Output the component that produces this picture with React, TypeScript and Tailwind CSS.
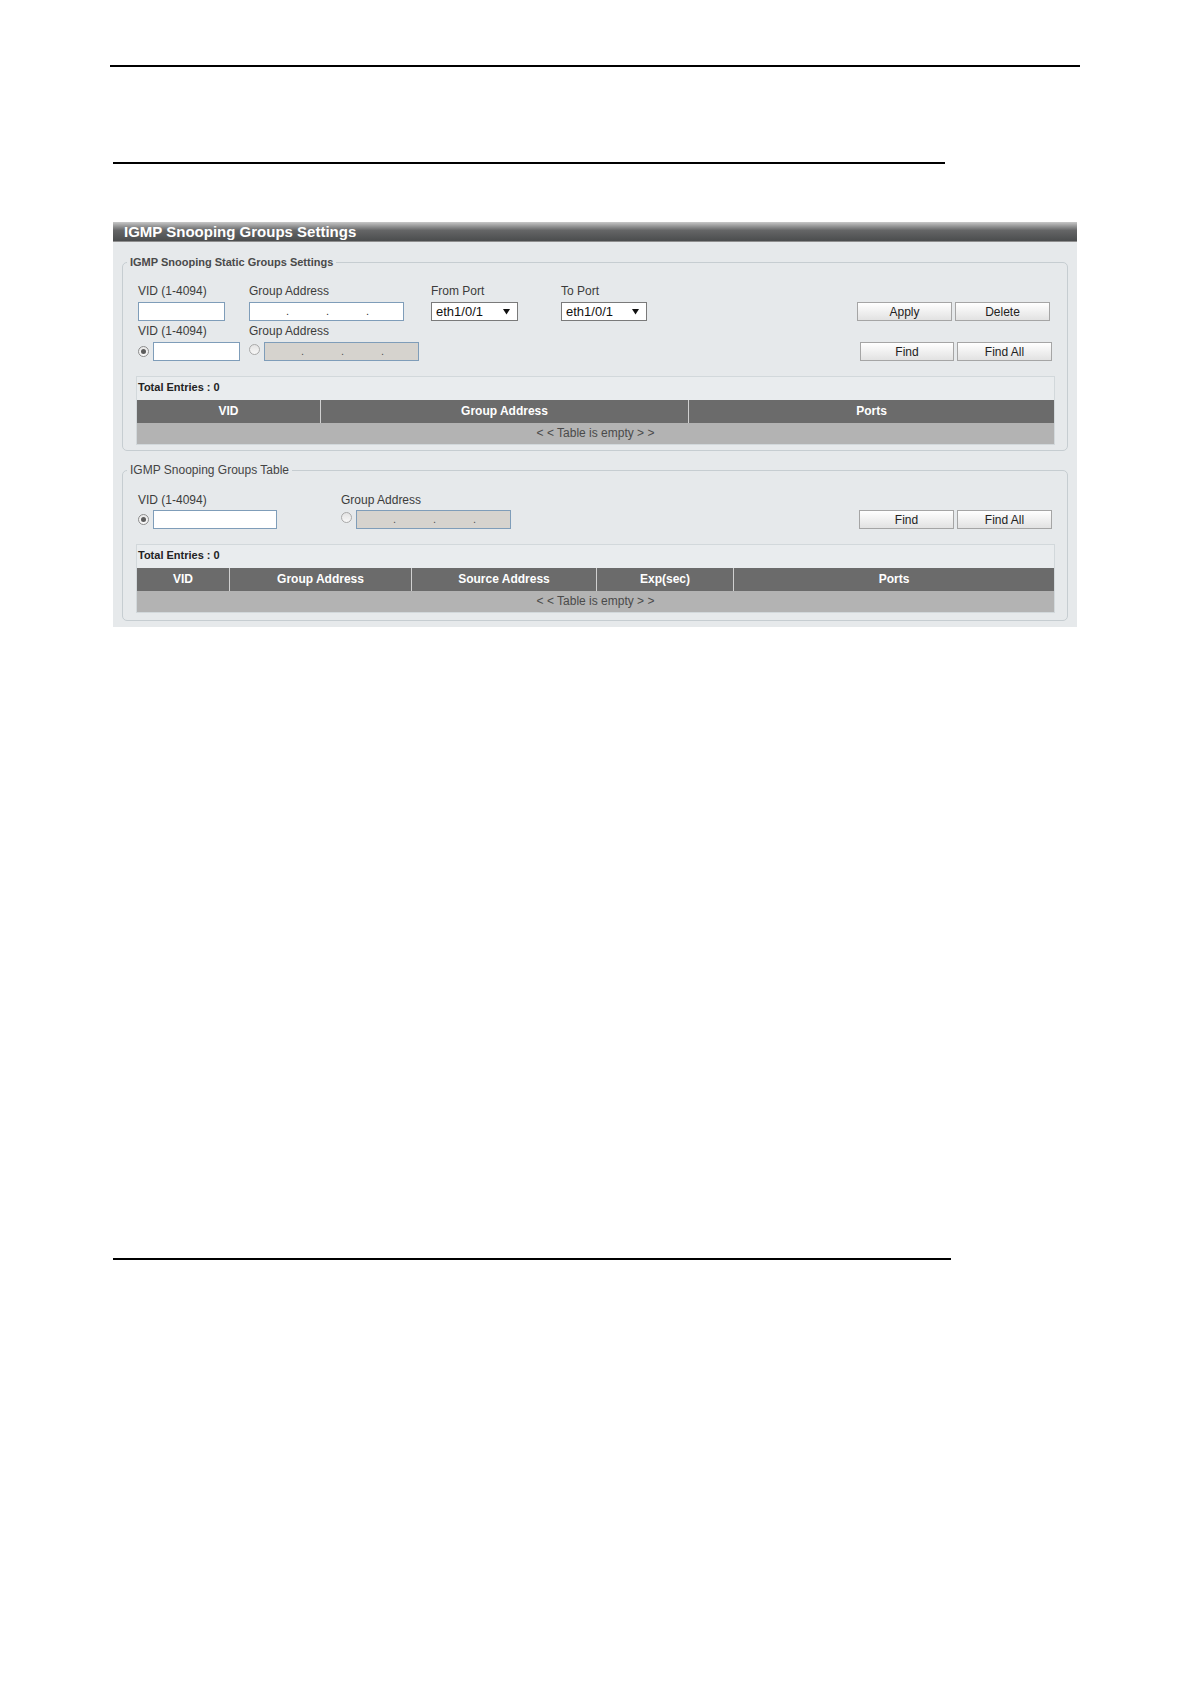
import React from "react";

type Col = { label: string; width: string };

const staticCols: Col[] = [
  { label: "VID", width: "w-[183px]" },
  { label: "Group Address", width: "w-[368px]" },
  { label: "Ports", width: "flex-1" },
];

const groupCols: Col[] = [
  { label: "VID", width: "w-[92px]" },
  { label: "Group Address", width: "w-[182px]" },
  { label: "Source Address", width: "w-[185px]" },
  { label: "Exp(sec)", width: "w-[137px]" },
  { label: "Ports", width: "flex-1" },
];

function Radio({ checked }: { checked?: boolean }) {
  return (
    <span
      className={`flex h-[11px] w-[11px] shrink-0 items-center justify-center rounded-full border ${
        checked
          ? "border-[#8c8c8c] bg-linear-to-b from-[#e8e8e8] to-[#fafafa]"
          : "border-[#a9a9a9] bg-linear-to-b from-[#e4e4e4] to-[#f7f7f7]"
      }`}
    >
      {checked ? <span className="h-[5px] w-[5px] rounded-full bg-[#5c5c5c]" /> : null}
    </span>
  );
}

function TextBox({ width }: { width: string }) {
  return <div className={`${width} h-[19px] border border-[#7f9db9] bg-white`} />;
}

function IpBox({ disabled }: { disabled?: boolean }) {
  return (
    <div
      className={`flex h-[19px] w-[155px] items-center border border-[#7f9db9] text-[11px] leading-none ${
        disabled ? "bg-[#d6d3ce] text-[#555]" : "bg-white text-[#333]"
      }`}
    >
      <span className="w-[36px]" />
      <span className="w-[4px]">.</span>
      <span className="w-[36px]" />
      <span className="w-[4px]">.</span>
      <span className="w-[36px]" />
      <span className="w-[4px]">.</span>
    </div>
  );
}

function Select({ width }: { width: string }) {
  return (
    <div
      className={`${width} flex h-[19px] items-center justify-between border border-[#7a7a7a] bg-white pl-[4px] pr-[7px] text-[13px] leading-none text-[#111]`}
    >
      <span>eth1/0/1</span>
      <svg width="7" height="7" viewBox="0 0 7 7">
        <path d="M0 1 L7 1 L3.5 6.5 Z" fill="#111" />
      </svg>
    </div>
  );
}

function Button({ label, width }: { label: string; width: string }) {
  return (
    <button
      className={`${width} h-[19px] border border-[#a5a5a5] bg-linear-to-b from-white to-[#e2e2e2] text-[12px] leading-none text-[#222]`}
    >
      {label}
    </button>
  );
}

function Label({ text }: { text: string }) {
  return <div className="h-[14px] text-[12px] leading-[14px] text-[#3c3c3c]">{text}</div>;
}

function EntriesTable({ cols }: { cols: Col[] }) {
  return (
    <div className="border border-[#d2d8db] bg-[#e9ecee]">
      <div className="h-[23px] pl-[1px] text-[11px] font-bold leading-[21px] text-[#222]">
        Total Entries : 0
      </div>
      <div className="flex h-[23px] bg-[#6b6b6b] text-[12px] font-bold leading-[23px] text-white">
        {cols.map((c, i) => (
          <div
            key={c.label}
            className={`${c.width} text-center ${i > 0 ? "border-l border-[#d0d0d0]" : ""}`}
          >
            {c.label}
          </div>
        ))}
      </div>
      <div className="h-[21px] bg-[#b3b3b3] text-center text-[12px] leading-[21px] text-[#4a4a4a]">
        {"< < Table is empty > >"}
      </div>
    </div>
  );
}

export default function App() {
  return (
    <div className="min-h-[1684px] w-full bg-white pt-[65px] font-['Liberation_Sans',Arial,sans-serif]">
      <div className="ml-[110px] h-[2px] w-[970px] bg-black" />
      <div className="ml-[113px] mt-[95px] h-[2px] w-[832px] bg-black" />

      <div className="ml-[113px] mt-[58px] w-[964px]">
        <div className="h-[20px] border-b border-[#8e8e8e] bg-linear-to-b from-[#c8c8c8] via-[#646566] via-45% to-[#4b4d4e] pl-[11px] text-[15px] font-bold leading-[19px] text-white">
          IGMP Snooping Groups Settings
        </div>

        <div className="bg-[#e6e9eb] px-[9px] pb-[6px] pt-[13px]">
          {/* static groups */}
          <fieldset className="rounded-[5px] border border-[#c6cdd1]">
            <legend className="ml-[4px] px-[3px] text-[11px] font-bold leading-[14px] text-[#4a4a4a]">
              IGMP Snooping Static Groups Settings
            </legend>
            <div className="pl-[15px] pr-[15px] pt-[15px]">
              <div className="flex items-end">
                <div className="w-[111px]">
                  <Label text="VID (1-4094)" />
                  <div className="mt-[4px]">
                    <TextBox width="w-[87px]" />
                  </div>
                </div>
                <div className="w-[182px]">
                  <Label text="Group Address" />
                  <div className="mt-[4px]">
                    <IpBox />
                  </div>
                </div>
                <div className="w-[130px]">
                  <Label text="From Port" />
                  <div className="mt-[4px]">
                    <Select width="w-[87px]" />
                  </div>
                </div>
                <div className="w-[130px]">
                  <Label text="To Port" />
                  <div className="mt-[4px]">
                    <Select width="w-[86px]" />
                  </div>
                </div>
                <div className="ml-auto mr-[2px] flex gap-[3px]">
                  <Button label="Apply" width="w-[95px]" />
                  <Button label="Delete" width="w-[95px]" />
                </div>
              </div>
              <div className="mt-[3px] flex items-end">
                <div className="w-[111px]">
                  <Label text="VID (1-4094)" />
                  <div className="mt-[4px] flex items-center gap-[4px]">
                    <Radio checked />
                    <TextBox width="w-[87px]" />
                  </div>
                </div>
                <div className="w-[182px]">
                  <Label text="Group Address" />
                  <div className="mt-[4px] flex items-start gap-[4px]">
                    <div className="pt-[2px]">
                      <Radio />
                    </div>
                    <IpBox disabled />
                  </div>
                </div>
                <div className="ml-auto flex gap-[3px]">
                  <Button label="Find" width="w-[94px]" />
                  <Button label="Find All" width="w-[95px]" />
                </div>
              </div>
            </div>
            <div className="ml-[13px] mr-[12px] mt-[15px] pb-[5px]">
              <EntriesTable cols={staticCols} />
            </div>
          </fieldset>

          {/* groups table */}
          <fieldset className="mt-[12px] rounded-[5px] border border-[#c6cdd1]">
            <legend className="ml-[4px] px-[3px] text-[12px] leading-[14px] text-[#444]">
              IGMP Snooping Groups Table
            </legend>
            <div className="pl-[15px] pr-[15px] pt-[16px]">
              <div className="flex items-end">
                <div className="w-[203px]">
                  <Label text="VID (1-4094)" />
                  <div className="mt-[3px] flex items-center gap-[4px]">
                    <Radio checked />
                    <TextBox width="w-[124px]" />
                  </div>
                </div>
                <div className="w-[182px]">
                  <Label text="Group Address" />
                  <div className="mt-[3px] flex items-start gap-[4px]">
                    <div className="pt-[2px]">
                      <Radio />
                    </div>
                    <IpBox disabled />
                  </div>
                </div>
                <div className="ml-auto flex gap-[3px]">
                  <Button label="Find" width="w-[95px]" />
                  <Button label="Find All" width="w-[95px]" />
                </div>
              </div>
            </div>
            <div className="ml-[13px] mr-[12px] mt-[15px] pb-[7px]">
              <EntriesTable cols={groupCols} />
            </div>
          </fieldset>
        </div>
      </div>

      <div className="ml-[113px] mt-[631px] h-[2px] w-[838px] bg-black" />
    </div>
  );
}
